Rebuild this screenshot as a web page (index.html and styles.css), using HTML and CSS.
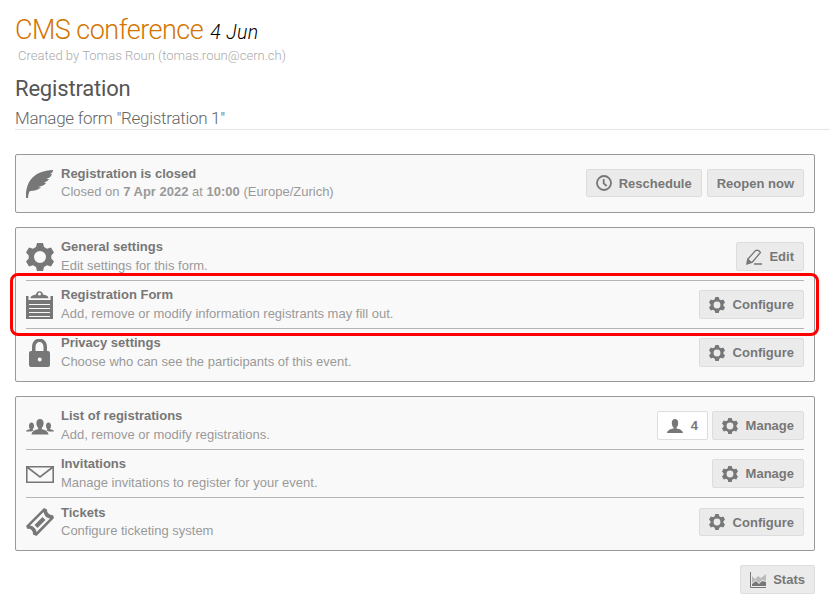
FILE: index.html
```
<!DOCTYPE html>
<html lang="en">
<head>
<meta charset="utf-8">
<title>CMS conference - Registration</title>
<link rel="stylesheet" href="styles.css">
</head>
<body>
<svg class="defs" width="0" height="0" aria-hidden="true">
  <symbol id="gear" viewBox="0 0 28 28"><path fill-rule="evenodd" d="M11 0h6l1 4 3 1.700 4-1.200 3 5-2.700 3v3l2.700 3-3 5-4-1.200-3 1.700-1 4h-6l-1-4-3-1.700-4 1.200-3-5 2.700-3v-3L0 9.500l3-5 4 1.200L10 4zM14 8a6 6 0 1 0 0 12a6 6 0 1 0 0-12z"/></symbol>
  <symbol id="person" viewBox="0 0 16 14"><path d="M8 0c2 0 3.200 1.500 3.200 3.800C11.200 6 10.400 7.800 9.500 8.500v1c3 .5 6 1.500 6.500 4.500H0c.5-3 3.500-4 6.500-4.500v-1C5.600 7.800 4.800 6 4.800 3.800 4.800 1.500 6 0 8 0z"/></symbol>
</svg>
<header class="head">
  <h1>CMS conference <em>4 Jun</em></h1>
  <p class="author">Created by Tomas Roun (tomas.roun@cern.ch)</p>
  <h2>Registration</h2>
  <h3>Manage form "Registration 1"</h3>
</header>
<main>
  <section class="panel status">
    <div class="row compact">
      <svg class="icon" viewBox="0 0 28 28"><path d="M0 28C-.5 12 7 1 27 0c.3 2-1 3-3 4.200l2-.2c-1 3-3 4-6 5h3c-1 2-3 3-5 3.500l2 .5c-2 3-5 3-8 4l3 .5C12 20 8 21 4 21c-1.500 2-1.700 4-2 7z"/></svg>
      <div class="text"><h4>Registration is closed</h4><p>Closed on <b>7 Apr 2022</b> at <b>10:00</b> (Europe/Zurich)</p></div>
      <div class="tools">
        <a class="btn"><svg viewBox="0 0 16 16"><path class="line" d="M8 1a7 7 0 1 0 0 14a7 7 0 1 0 0-14zM7.700 4v4.300l3 2.700"/></svg>Reschedule</a>
        <a class="btn">Reopen now</a>
      </div>
    </div>
  </section>

  <section class="panel">
    <div class="row">
      <svg class="icon"><use href="#gear"/></svg>
      <div class="text"><h4>General settings</h4><p>Edit settings for this form.</p></div>
      <div class="tools"><a class="btn"><svg viewBox="0 0 16 16"><path d="M0 16l1.300-7 5.500 4.700z"/><path class="thin" d="M2 10l7.500-8.500q3.500-1 5 2L6 13.500M8 15h8"/></svg>Edit</a></div>
    </div>
    <div class="row">
      <svg class="icon" viewBox="0 0 28 28"><path fill-rule="evenodd" d="M0 5h2.500v4h22V5H27v23H0zM3 13v1h21v-1zm0 4v1h21v-1zm0 4v1h21v-1zm0 4v1h21v-1z"/><path fill-rule="evenodd" d="M4.500 7.200c0-2.500 3-3 5.500-3.700C10.500-1 16.500-1 17 3.500c2.500.7 5.500 1.200 5.500 3.700zM13.500 1.500a1.500 1.500 0 1 0 0 3a1.500 1.500 0 1 0 0-3z"/></svg>
      <div class="text"><h4>Registration Form</h4><p>Add, remove or modify information registrants may fill out.</p></div>
      <div class="tools"><a class="btn"><svg><use href="#gear"/></svg>Configure</a></div>
      <div class="callout"></div>
    </div>
    <div class="row">
      <svg class="icon" viewBox="0 0 28 28"><path fill-rule="evenodd" d="M3 14q0-2 2-2h1V8C6 3 9-.5 13.500-.5S21 3 21 8v4h1q2 0 2 2v12q0 2-2 2H5q-2 0-2-2zM9.500 12h8V8c0-3-1.500-5-4-5s-4 2-4 5zM13.700 18.500a2 2 0 1 0 0 4a2 2 0 1 0 0-4z"/></svg>
      <div class="text"><h4>Privacy settings</h4><p>Choose who can see the participants of this event.</p></div>
      <div class="tools"><a class="btn"><svg><use href="#gear"/></svg>Configure</a></div>
    </div>
  </section>

  <section class="panel">
    <div class="row">
      <svg class="icon" viewBox="0 0 28 28"><path d="M14 7c2.400 0 3.600 1.700 3.600 4.300 0 2-.8 3.700-1.800 4.500v1.500c3 .7 6.200 1.700 6.700 5.200h-17c.5-3.500 3.700-4.500 6.700-5.200v-1.500c-1-.8-1.800-2.500-1.800-4.500C10.400 8.700 11.600 7 14 7zM5.500 10.500C7.200 10.500 8 12 8 13.700s-.5 2.500-1.200 3.300v1l1.200.3-3 1.200H0c0-1.500 2-2 4.200-2.500C3.500 16.500 3 15.500 3 13.700s.8-3.200 2.500-3.200zM22.500 10.500c1.700 0 2.500 1.500 2.500 3.200s-.5 2.500-1.200 3.300C26 17.500 28 18 28 19.500h-5l-3-1.200 1.200-.3v-1c-.7-.8-1.200-1.600-1.200-3.300s.8-3.200 2.500-3.200z"/></svg>
      <div class="text"><h4>List of registrations</h4><p>Add, remove or modify registrations.</p></div>
      <div class="tools">
        <a class="btn count"><svg><use href="#person"/></svg>4</a>
        <a class="btn"><svg><use href="#gear"/></svg>Manage</a>
      </div>
    </div>
    <div class="row">
      <svg class="icon" viewBox="0 0 28 28"><path class="envelope" d="M.8 6.800h26.400v15.400H.8zM1 7l13 10L27 7"/></svg>
      <div class="text"><h4>Invitations</h4><p>Manage invitations to register for your event.</p></div>
      <div class="tools"><a class="btn"><svg><use href="#gear"/></svg>Manage</a></div>
    </div>
    <div class="row compact last">
      <svg class="icon" viewBox="0 0 28 28"><path fill-rule="evenodd" d="M18 0l3 1.500q-.5 2.500 2 4.500 2 1.500 4 1l1 3L10.500 28 7 26.500q.5-2.500-1.500-4.500T1.500 21L0 18zM17.500 4L4 17.500q5.500 1 6.500 6.500L24 10.500Q18.500 9.500 17.500 4z"/><path d="M8.500 17l8-8 3 3-8 8z"/></svg>
      <div class="text"><h4>Tickets</h4><p>Configure ticketing system</p></div>
      <div class="tools"><a class="btn"><svg><use href="#gear"/></svg>Configure</a></div>
    </div>
  </section>

  <div class="footer"><a class="btn"><svg viewBox="0 0 16 16"><path class="pale" d="M2 4l3 3 3-3 3 2 5-4v7l-4-1-3 3-3-3-4 3z"/><path d="M2 12l4-3 3 3 3-3 4 1v4H2z"/><path class="axis" d="M.5 0v15.500H16"/></svg>Stats</a></div>
</main>
</body>
</html>
```
FILE: styles.css
```
* { box-sizing: border-box; }
body {
  margin: 0;
  overflow: hidden;
  background: #fff;
  color: #999;
  font: 13px/19px "Liberation Sans", Arial, sans-serif;
}
h1, h2, h3, h4, p { margin: 0; }
.defs { display: none; }

.head {
  height: 130px;
  margin-left: 15px;
  padding-top: 12px;
  border-bottom: 1px solid #e5e5e5;
  font-family: Roboto, sans-serif;
  font-weight: 300;
}
h1 { color: #d27502; font-size: 27px; font-weight: 300; line-height: 36px; letter-spacing: -.53px; }
h1 em { margin-left: 1px; color: #000; font-size: 19.500px; letter-spacing: .4px; }
.author { margin-top: -3px; padding-left: 3px; color: #aaa; font-size: 13px; line-height: 16px; letter-spacing: .020px; }
h2 { margin-top: 11px; color: #555; font-size: 22px; font-weight: 400; line-height: 28px; letter-spacing: -.18px; }
h3 { margin-top: 4px; color: #666; font-size: 17px; font-weight: 300; line-height: 22px; letter-spacing: -.28px; }

main { padding: 24px 15px 0; }
.panel {
  height: 155px;
  margin-bottom: 14px;
  padding: 0 10px;
  border: 1px solid #999;
  border-radius: 2px;
  background: #f9f9f9;
}
.status { height: 59px; }
.row {
  position: relative;
  display: flex;
  align-items: flex-start;
  height: 52px;
  padding-top: 9px;
}
.row + .row { height: 48px; padding-top: 4px; border-top: 1px solid #b5b5b5; }
.row + .last { padding-top: 5px; }
.icon { width: 28px; height: 28px; margin: 6px 7px 0 0; }
.last .icon { margin-top: 5px; }
svg { flex: none; fill: #777; }
.text { flex: 1; }
h4 { color: #777; font-size: 13px; font-weight: bold; }
.compact .text { padding-top: 1px; line-height: 18px; }
.tools { display: flex; gap: 4px; margin-top: 5px; }
.status .tools { gap: 5px; }
.btn {
  display: flex;
  align-items: center;
  height: 29px;
  padding: 0 9px;
  border: 1px solid #ddd;
  border-radius: 2px;
  background: #ebebeb;
  color: #777;
  font-weight: bold;
}
.compact .btn { height: 28px; }
.btn svg { width: 16px; height: 16px; margin-right: 7.500px; }
.status .btn svg { margin-right: 7px; }
.count { background: #fff; }
.line { fill: none; stroke: #777; stroke-width: 1.800; }
.thin { fill: none; stroke: #777; stroke-width: 1.300; }
.envelope { fill: none; stroke: #777; stroke-width: 1.600; }
.pale { fill: #bbb; }
.axis { fill: none; stroke: #777; }
.callout {
  position: absolute;
  inset: -8px -15px auto -16px;
  height: 63px;
  border: 3px solid #f00;
  border-radius: 8px;
  z-index: 1;
}
.footer { display: flex; justify-content: flex-end; }
```
